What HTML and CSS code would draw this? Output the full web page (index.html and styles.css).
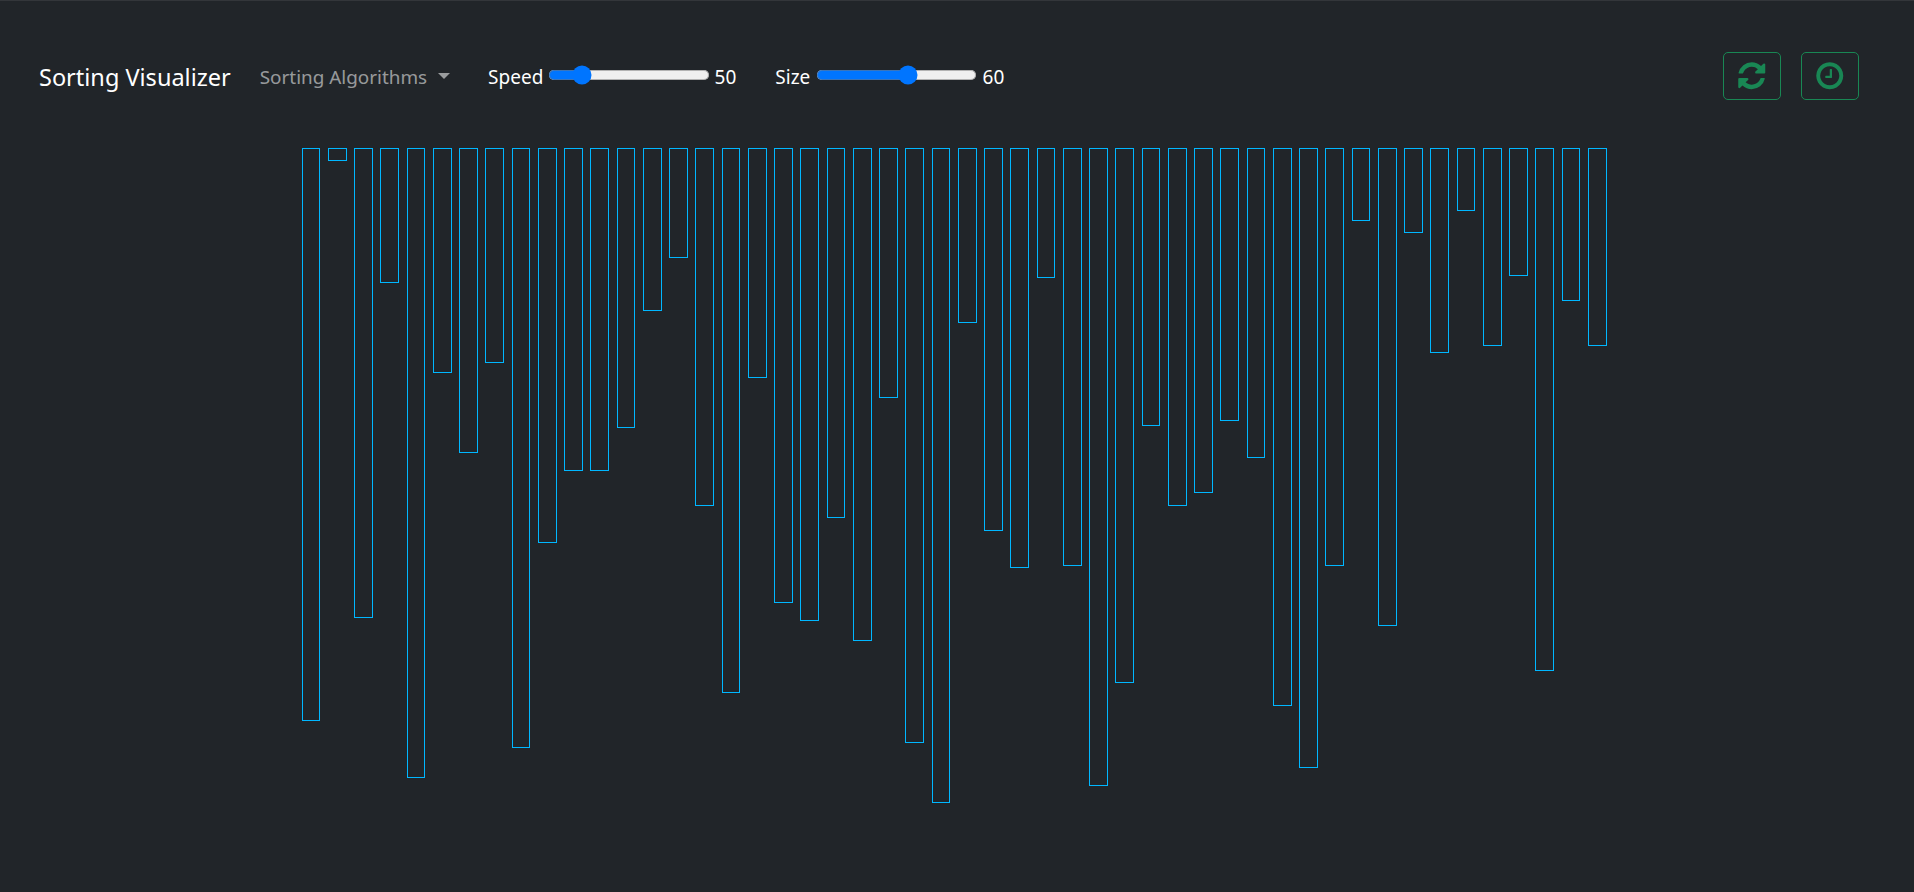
FILE: index.html
```html
<!DOCTYPE html>
<html lang="en">
<head>
    <meta charset="UTF-8">
    <meta name="viewport" content="width=device-width, initial-scale=1.0">
    <title>Sorting Visualizer</title>
    <link rel="stylesheet" href="styles.css">
</head>
<body>
    <nav class="navbar">
        <a class="brand" href="#">Sorting Visualizer</a>
        <a class="nav-link" href="#">Sorting Algorithms<span class="caret"></span></a>
        <label class="slider slider-speed">Speed <input type="range" min="0" max="300" value="50"> <span>50</span></label>
        <label class="slider slider-size">Size <input type="range" min="5" max="100" value="60"> <span>60</span></label>
        <div class="nav-buttons">
            <button class="btn-outline" type="button" aria-label="New array">
                <svg viewBox="0 0 1792 1792"><path d="M1639 1056q0 5-1 7-64 268-268 434.5t-478 166.5q-146 0-282.5-55t-243.5-157l-129 129q-19 19-45 19t-45-19-19-45v-448q0-26 19-45t45-19h448q26 0 45 19t19 45-19 45l-137 137q71 66 161 102t187 36q134 0 250-65t186-179q11-17 53-117 8-23 30-23h192q13 0 22.5 9.5t9.5 22.5zm25-800v448q0 26-19 45t-45 19h-448q-26 0-45-19t-19-45 19-45l138-138q-148-137-349-137-134 0-250 65t-186 179q-11 17-53 117-8 23-30 23h-199q-13 0-22.5-9.5t-9.5-22.5v-7q65-268 270-434.5t480-166.5q146 0 284 55.5t245 156.5l130-129q19-19 45-19t45 19 19 45z"/></svg>
            </button>
            <button class="btn-outline" type="button" aria-label="Complexity">
                <svg viewBox="0 0 1792 1792"><path d="M1024 544v448q0 14-9 23t-23 9h-320q-14 0-23-9t-9-23v-64q0-14 9-23t23-9h224v-352q0-14 9-23t23-9h64q14 0 23 9t9 23zm416 352q0-148-73-273t-198-198-273-73-273 73-198 198-73 273 73 273 198 198 273 73 273-73 198-198 73-273zm224 0q0 209-103 385.5t-279.5 279.5-385.5 103-385.5-103-279.5-279.5-103-385.5 103-385.5 279.5-279.5 385.5-103 385.5 103 279.5 279.5 103 385.5z"/></svg>
            </button>
        </div>
    </nav>
    <div class="bars">
        <div class="bar" style="height:572.5px"></div>
        <div class="bar" style="height:12.5px"></div>
        <div class="bar" style="height:470px"></div>
        <div class="bar" style="height:135px"></div>
        <div class="bar" style="height:630px"></div>
        <div class="bar" style="height:225px"></div>
        <div class="bar" style="height:305px"></div>
        <div class="bar" style="height:215px"></div>
        <div class="bar" style="height:600px"></div>
        <div class="bar" style="height:395px"></div>
        <div class="bar" style="height:322.5px"></div>
        <div class="bar" style="height:322.5px"></div>
        <div class="bar" style="height:280px"></div>
        <div class="bar" style="height:162.5px"></div>
        <div class="bar" style="height:110px"></div>
        <div class="bar" style="height:357.5px"></div>
        <div class="bar" style="height:545px"></div>
        <div class="bar" style="height:230px"></div>
        <div class="bar" style="height:455px"></div>
        <div class="bar" style="height:472.5px"></div>
        <div class="bar" style="height:370px"></div>
        <div class="bar" style="height:492.5px"></div>
        <div class="bar" style="height:250px"></div>
        <div class="bar" style="height:595px"></div>
        <div class="bar" style="height:655px"></div>
        <div class="bar" style="height:175px"></div>
        <div class="bar" style="height:382.5px"></div>
        <div class="bar" style="height:420px"></div>
        <div class="bar" style="height:130px"></div>
        <div class="bar" style="height:417.5px"></div>
        <div class="bar" style="height:637.5px"></div>
        <div class="bar" style="height:535px"></div>
        <div class="bar" style="height:277.5px"></div>
        <div class="bar" style="height:357.5px"></div>
        <div class="bar" style="height:345px"></div>
        <div class="bar" style="height:272.5px"></div>
        <div class="bar" style="height:310px"></div>
        <div class="bar" style="height:557.5px"></div>
        <div class="bar" style="height:620px"></div>
        <div class="bar" style="height:417.5px"></div>
        <div class="bar" style="height:72.5px"></div>
        <div class="bar" style="height:477.5px"></div>
        <div class="bar" style="height:85px"></div>
        <div class="bar" style="height:205px"></div>
        <div class="bar" style="height:62.5px"></div>
        <div class="bar" style="height:197.5px"></div>
        <div class="bar" style="height:127.5px"></div>
        <div class="bar" style="height:522.5px"></div>
        <div class="bar" style="height:152.5px"></div>
        <div class="bar" style="height:197.5px"></div>
    </div>
</body>
</html>
```

FILE: styles.css
```css
body {
    margin: 0;
    height: 892px;
    box-sizing: border-box;
    overflow: hidden;
    border-top: 1px solid #33363a;
    background-color: #212529;
    font-family: "Noto Sans", "Open Sans", sans-serif;
    color: #fff;
}
.navbar {
    display: flex;
    align-items: center;
    height: 147px;
    box-sizing: border-box;
    padding: 2px 55px 0 39px;
}
.brand {
    padding-top: 2px;
    font-size: 23.5px;
    color: #fff;
    text-decoration: none;
    margin-right: 29px;
}
.nav-link {
    display: flex;
    align-items: center;
    padding-top: 2px;
    font-size: 18.9px;
    color: rgba(255, 255, 255, .55);
    text-decoration: none;
    margin-right: 38px;
}
.caret {
    width: 0;
    height: 0;
    margin: 0 0 2px 11px;
    border-top: 6px solid rgba(255, 255, 255, .55);
    border-left: 6px solid transparent;
    border-right: 6px solid transparent;
}
.slider {
    display: flex;
    align-items: center;
    gap: 5px;
    padding-top: 2px;
    font-size: 19px;
    white-space: nowrap;
}
.slider input {
    zoom: 1.25;
    margin: 0 0 3px;
}
.slider-speed {
    margin-right: 39px;
}
.slider-size {
    gap: 5.5px;
}
.nav-buttons {
    display: flex;
    gap: 20px;
    margin-left: auto;
}
.btn-outline {
    display: flex;
    align-items: center;
    justify-content: center;
    width: 58px;
    height: 48px;
    padding: 0;
    background: transparent;
    border: 1px solid #198754;
    border-radius: 5px;
}
.btn-outline svg {
    width: 31.5px;
    height: 31.5px;
    fill: #198754;
}
.bars {
    display: flex;
    align-items: flex-start;
    gap: 7.5px;
    padding-left: 301.6px;
}
.bar {
    width: 18.75px;
    box-sizing: border-box;
    border: 1px solid #00b7ff;
}
```
